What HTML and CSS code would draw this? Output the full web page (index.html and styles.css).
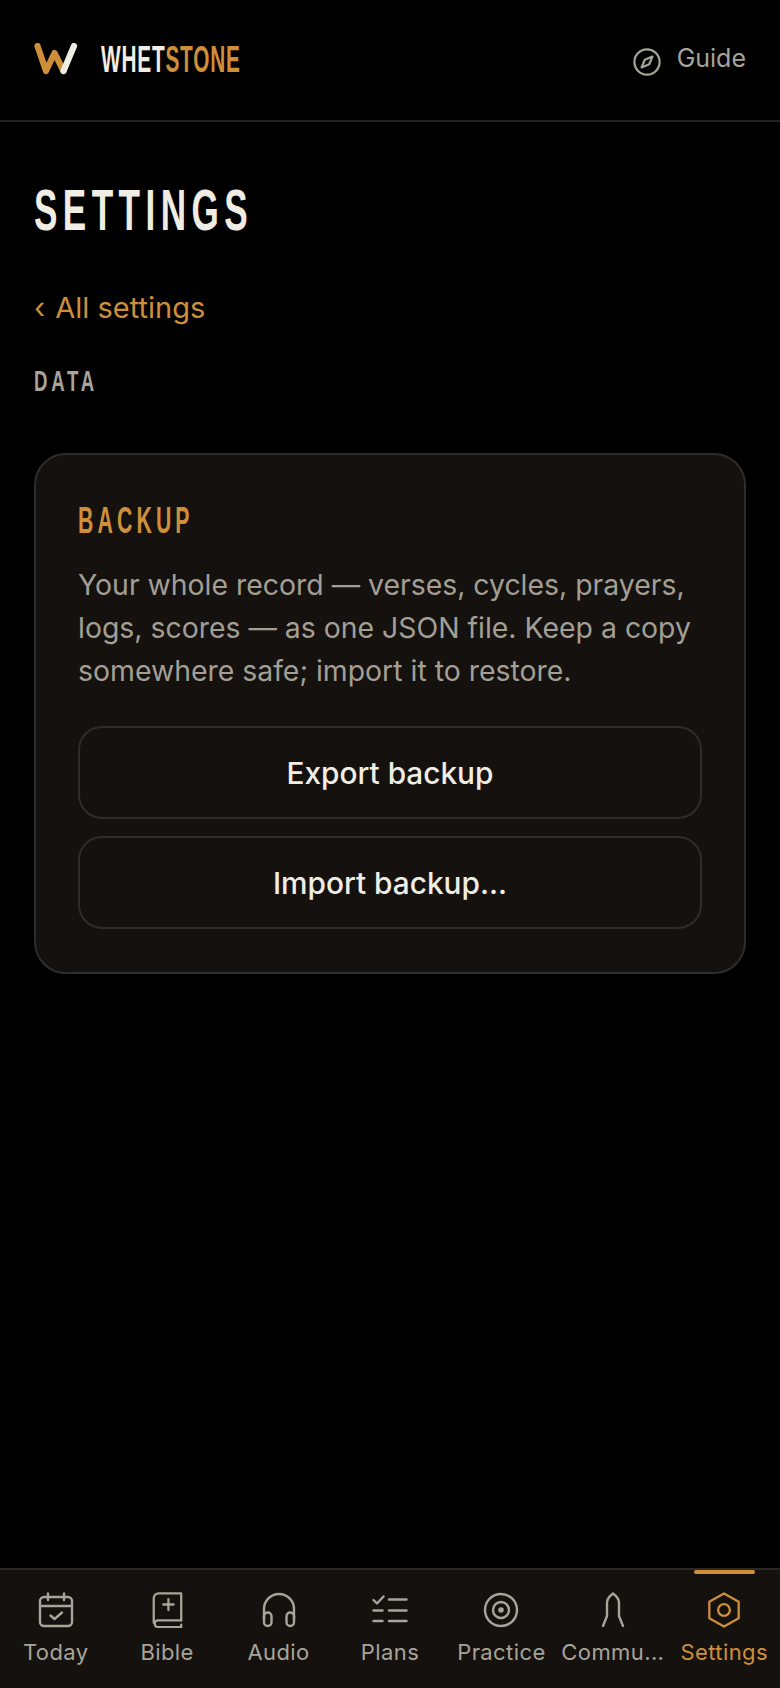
FILE: index.html
```html
<!DOCTYPE html>
<html lang="en">

<head>
    <meta charset="UTF-8">
    <meta name="viewport" content="width=device-width, initial-scale=1.0">
    <title>Whetstone - Settings</title>
    <link rel="stylesheet" href="styles.css">
</head>

<body>
    <header class="topbar">
        <div class="brand">
            <svg class="brand-mark" viewBox="0 0 44 34" fill="none" stroke-width="6.2" stroke-linecap="round" stroke-linejoin="round">
                <path d="M3.5 3 L12 28 L20.5 10 L29.5 28" stroke="#cf8f3a" />
                <path d="M29.5 28 L40 3" stroke="#f0ede4" />
            </svg>
            <span class="brand-name"><span class="brand-light">WHET</span><span class="brand-gold">STONE</span></span>
        </div>
        <a class="guide">
            <svg class="guide-icon" viewBox="0 0 28 28" fill="none" stroke="#a8a499" stroke-width="2.2" stroke-linejoin="round">
                <circle cx="14" cy="14" r="12.6" />
                <path d="M19.4 8.6 L16.2 16.2 L8.6 19.4 L11.8 11.8 Z" />
            </svg>
            <span>Guide</span>
        </a>
    </header>

    <main class="content">
        <h1 class="page-title"><span>SETTINGS</span></h1>
        <a class="back-link"><span class="back-chevron">‹</span> All settings</a>
        <h2 class="section-label"><span>DATA</span></h2>

        <section class="card">
            <h3 class="card-title"><span>BACKUP</span></h3>
            <p class="card-text">Your whole record — verses, cycles, prayers, logs, scores — as one JSON file. Keep a copy somewhere safe; import it to restore.</p>
            <button class="card-button">Export backup</button>
            <button class="card-button">Import backup...</button>
        </section>
    </main>

    <nav class="tabbar">
        <a class="tab">
            <svg viewBox="0 0 36 36" fill="none" stroke="currentColor" stroke-width="2.4" stroke-linecap="round" stroke-linejoin="round">
                <rect x="2" y="5" width="32" height="29" rx="4" />
                <path d="M10 1.5 V8 M26 1.5 V8 M2 14 H34 M12.5 23.5 L16.5 27 L24 20.5" />
            </svg>
            <span>Today</span>
        </a>
        <a class="tab">
            <svg viewBox="0 0 36 38" fill="none" stroke="currentColor" stroke-width="2.4" stroke-linecap="round" stroke-linejoin="round">
                <path d="M33 30 V1.5 H9 A5 5 0 0 0 4 6.5 V32.5" />
                <path d="M33 30 H8.5 A3.5 3.5 0 0 0 8.5 37 H33 V34.5" />
                <path d="M19.5 7.5 V19 M14 13.2 H25" />
            </svg>
            <span>Bible</span>
        </a>
        <a class="tab">
            <svg viewBox="0 0 36 36" fill="none" stroke="currentColor" stroke-width="2.4" stroke-linecap="round" stroke-linejoin="round">
                <path d="M3 27 V17 A15 15 0 0 1 33 17 V27" />
                <rect x="3" y="20.5" width="7.5" height="13.5" rx="3.7" />
                <rect x="25.5" y="20.5" width="7.5" height="13.5" rx="3.7" />
            </svg>
            <span>Audio</span>
        </a>
        <a class="tab">
            <svg viewBox="0 0 36 36" fill="none" stroke="currentColor" stroke-width="2.4" stroke-linecap="round" stroke-linejoin="round">
                <path d="M1.5 8 L5 11.5 L11.5 4.5 M17 7.5 H34.5 M1.5 18.5 H10.5 M17 18.5 H34.5 M1.5 29 H10.5 M17 29 H34.5" />
            </svg>
            <span>Plans</span>
        </a>
        <a class="tab">
            <svg viewBox="0 0 36 36" fill="none" stroke="currentColor" stroke-width="2.4">
                <circle cx="18" cy="18" r="16" />
                <circle cx="18" cy="18" r="8" />
                <circle cx="18" cy="18" r="1.6" fill="currentColor" />
            </svg>
            <span>Practice</span>
        </a>
        <a class="tab">
            <svg viewBox="0 0 36 36" fill="none" stroke="currentColor" stroke-width="2.4" stroke-linecap="round" stroke-linejoin="round">
                <path d="M8 34 L12 24 V11 Q12 6 18 1.5 Q24 6 24 11 V24 L28 34" />
            </svg>
            <span>Commu...</span>
        </a>
        <a class="tab tab-active">
            <svg viewBox="0 0 36 38" fill="none" stroke="currentColor" stroke-width="2.4" stroke-linejoin="round">
                <path d="M18 1.5 L33.5 10.2 V27.8 L18 36.5 L2.5 27.8 V10.2 Z" />
                <circle cx="18" cy="19" r="6.2" />
            </svg>
            <span>Settings</span>
        </a>
    </nav>
</body>

</html>
```

FILE: styles.css
```css
/* General */
html,
body {
    height: 100%;
}

body {
    margin: 0;
    background-color: #000;
    color: #f0ede4;
    font-family: Inter, "Liberation Sans", sans-serif;
    display: flex;
    flex-direction: column;
}

/* Top bar */
.topbar {
    height: 120px;
    border-bottom: 2px solid #25231f;
    padding: 0 34px;
    display: flex;
    align-items: center;
    justify-content: space-between;
}

.brand {
    display: flex;
    align-items: center;
    gap: 23px;
}

.brand-mark {
    width: 44px;
    height: 34px;
}

.brand-name {
    font-family: "Liberation Sans", sans-serif;
    font-size: 36px;
    line-height: 36px;
    font-weight: 700;
    display: inline-block;
    transform: scaleX(0.577);
    transform-origin: left center;
    letter-spacing: 1.4px;
    width: 137px;
    white-space: nowrap;
}

.brand-gold {
    color: #cf8f3a;
}

.guide {
    display: flex;
    align-items: center;
    gap: 16px;
    color: #a8a499;
    font-size: 25px;
    margin-top: -4px;
}

.guide-icon {
    width: 28px;
    height: 28px;
    margin-top: 7px;
}

/* Content */
.content {
    flex: 1;
    padding: 0 34px;
}

.page-title {
    margin: 57px 0 0;
    font-family: "Liberation Sans", sans-serif;
    font-size: 58px;
    line-height: 62px;
    font-weight: 700;
    letter-spacing: 9px;
    white-space: nowrap;
}

.page-title span,
.section-label span,
.card-title span {
    display: inline-block;
    transform-origin: left center;
}

.page-title span {
    transform: scaleX(0.605);
}

.back-link {
    display: block;
    margin-top: 47px;
    color: #cf8f3a;
    font-size: 29px;
    line-height: 40px;
}

.back-chevron {
    margin-right: 2px;
}

.section-label {
    margin: 37px 0 0;
    color: #a8a499;
    font-family: "Liberation Sans", sans-serif;
    font-size: 30px;
    line-height: 32px;
    font-weight: 700;
    letter-spacing: 6px;
}

.section-label span {
    transform: scaleX(0.62);
}

/* Card */
.card {
    margin-top: 56px;
    padding: 49px 42px 43px;
    background-color: #14110e;
    border: 2px solid #2f2d29;
    border-radius: 32px;
}

.card-title {
    margin: 0;
    color: #cf8f3a;
    font-family: "Liberation Sans", sans-serif;
    font-size: 36px;
    line-height: 34px;
    font-weight: 700;
    letter-spacing: 7px;
}

.card-title span {
    transform: scaleX(0.59);
}

.card-text {
    margin: 25px 0 34px;
    color: #a39f94;
    font-size: 28.4px;
    line-height: 43px;
}

.card-button {
    display: block;
    width: 100%;
    height: 93px;
    margin-top: 17px;
    background-color: transparent;
    border: 2px solid #2f2d29;
    border-radius: 24px;
    color: #f0ede4;
    font-family: Inter, "Liberation Sans", sans-serif;
    font-size: 29.8px;
    font-weight: 500;
}

/* Bottom tabs */
.tabbar {
    height: 118px;
    border-top: 2px solid #2a2824;
    background-color: #14110e;
    display: grid;
    grid-template-columns: repeat(7, 1fr);
}

.tab {
    position: relative;
    display: flex;
    flex-direction: column;
    align-items: center;
    color: #a8a499;
    font-size: 22px;
    line-height: 28px;
    letter-spacing: 0.4px;
    white-space: nowrap;
}

.tab svg {
    width: 36px;
    height: 36px;
    margin-top: 22px;
    margin-bottom: 10px;
}

.tab-active {
    color: #cf8f3a;
}

.tab-active::before {
    content: "";
    position: absolute;
    top: 0;
    left: 25px;
    right: 25px;
    height: 4px;
    border-radius: 2px;
    background-color: #cf8f3a;
}
```
